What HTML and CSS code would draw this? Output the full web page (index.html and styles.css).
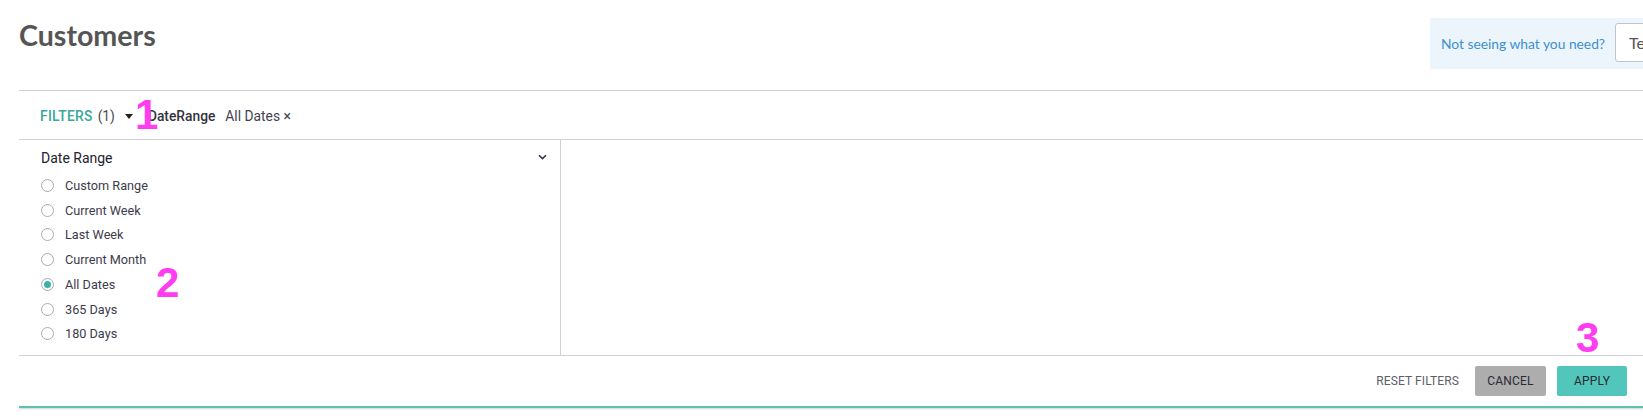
FILE: index.html
```html
<!DOCTYPE html>
<html>
<head>
<meta charset="utf-8">
<link rel="stylesheet" href="styles.css">
</head>
<body>
<div class="page">
  <header class="top">
    <h1 class="title">Customers</h1>
    <div class="help">
      <span class="help-text">Not seeing what you need?</span>
      <div class="help-input">Te</div>
    </div>
  </header>

  <div class="filterbar">
    <span class="filters-label">FILTERS</span>
    <span class="filters-count">(1)</span>
    <span class="caret"></span>
    <span class="chip-name">DateRange</span>
    <span class="chip-value">All Dates <span class="chip-x">×</span></span>
    <span class="annot annot-1">1</span>
  </div>

  <div class="panel">
    <div class="col">
      <div class="col-head">
        <span class="col-title">Date Range</span>
        <svg class="chev" width="9" height="6" viewBox="0 0 9 6"><path d="M1 1.2 L4.5 4.6 L8 1.2" fill="none" stroke="#33334a" stroke-width="1.6"/></svg>
      </div>
      <ul class="options">
        <li class="opt"><span class="radio"></span>Custom Range</li>
        <li class="opt"><span class="radio"></span>Current Week</li>
        <li class="opt"><span class="radio"></span>Last Week</li>
        <li class="opt"><span class="radio"></span>Current Month</li>
        <li class="opt"><span class="radio checked"></span>All Dates</li>
        <li class="opt"><span class="radio"></span>365 Days</li>
        <li class="opt"><span class="radio"></span>180 Days</li>
      </ul>
      <span class="annot annot-2">2</span>
    </div>
    <div class="rest"></div>
  </div>

  <div class="footer">
    <span class="reset">RESET FILTERS</span>
    <button class="btn btn-cancel">CANCEL</button>
    <button class="btn btn-apply">APPLY</button>
    <span class="annot annot-3">3</span>
  </div>
  <div class="teal-line"></div>
</div>
</body>
</html>
```

FILE: styles.css
```css
html, body {
  margin: 0;
  padding: 0;
  background: #ffffff;
  overflow: hidden;
}
body {
  width: 1643px;
  height: 419px;
  font-family: Roboto, "Liberation Sans", sans-serif;
  color: #3a3a4a;
}
.page {
  margin-left: 19px;
  width: 1624px;
  position: relative;
}

/* header */
.top {
  display: flex;
  height: 90px;
  border-bottom: 1px solid #cfcfd6;
  box-sizing: content-box;
}
.title {
  flex: 0 0 1411px;
  margin: 0;
  padding-top: 17px;
  font-family: Lato, "Open Sans", sans-serif;
  font-weight: 700;
  font-size: 28.6px;
  line-height: 36px;
  color: #555555;
}
.help {
  flex: 0 0 auto;
  width: 320px;
  height: 51px;
  margin-top: 18px;
  background: #edf5fc;
  display: flex;
  align-items: center;
  padding-left: 11px;
  box-sizing: border-box;
}
.help-text {
  font-family: Lato, "Open Sans", sans-serif;
  font-size: 13.8px;
  color: #3a91cf;
  margin-right: 10px;
  white-space: nowrap;
}
.help-input {
  width: 200px;
  height: 39px;
  box-sizing: border-box;
  border: 1px solid #c4c4c4;
  border-radius: 3px;
  background: #fff;
  font-family: Lato, "Open Sans", sans-serif;
  font-size: 16px;
  color: #555;
  line-height: 37px;
  padding-left: 13px;
  margin-top: -2px;
}

/* filter bar */
.filterbar {
  height: 49px;
  box-sizing: border-box;
  border-bottom: 1px solid #cfcfd6;
  display: flex;
  align-items: center;
  padding-left: 21px;
  padding-top: 2px;
  font-size: 13.8px;
  position: relative;
}
.filters-label {
  color: #3aa899;
  font-weight: 500;
  letter-spacing: 0.3px;
}
.filters-count {
  color: #4a4a55;
  margin-left: 5px;
}
.caret {
  width: 0;
  height: 0;
  border-left: 4px solid transparent;
  border-right: 4px solid transparent;
  border-top: 5px solid #222;
  margin-left: 10px;
  margin-top: 1px;
}
.chip-name {
  margin-left: 15px;
  color: #333340;
  font-weight: 500;
}
.chip-value {
  margin-left: 10px;
  color: #444450;
}
.chip-x {
  font-size: 14px;
}

/* panel */
.panel {
  display: flex;
  height: 215px;
  border-bottom: 1px solid #cfcfd6;
}
.col {
  flex: 0 0 542px;
  border-right: 1px solid #cfcfd6;
  padding: 8px 0 0 0;
  box-sizing: border-box;
  position: relative;
}
.col-head {
  display: flex;
  align-items: center;
  justify-content: space-between;
  height: 20px;
  padding: 0 13px 0 22px;
}
.col-title {
  font-size: 14px;
  color: #22222e;
}
.chev {
  margin-top: -2px;
}
.options {
  list-style: none;
  margin: 5px 0 0 0;
  padding: 0 0 0 22px;
}
.opt {
  display: flex;
  align-items: center;
  height: 24.75px;
  font-size: 12.7px;
  color: #3c3c4c;
}
.radio {
  width: 13px;
  height: 13px;
  border: 1px solid #a9a9b2;
  border-radius: 50%;
  box-sizing: border-box;
  margin-right: 11px;
  display: flex;
  align-items: center;
  justify-content: center;
  flex: 0 0 auto;
}
.radio.checked::after {
  content: "";
  width: 7px;
  height: 7px;
  border-radius: 50%;
  background: #3ab3a4;
}
.rest {
  flex: 1;
}

/* footer */
.footer {
  height: 50px;
  display: flex;
  align-items: flex-start;
  justify-content: flex-end;
  padding: 10px 16px 0 0;
  box-sizing: border-box;
  position: relative;
}
.reset {
  font-size: 12px;
  color: #5e5e6a;
  line-height: 30px;
  margin-right: 16px;
  letter-spacing: 0.1px;
}
.btn {
  height: 30px;
  border: none;
  border-radius: 2px;
  font-family: Roboto, "Liberation Sans", sans-serif;
  font-size: 12px;
  color: #2a2a35;
  padding: 0;
  letter-spacing: 0.2px;
}
.btn-cancel {
  width: 71px;
  background: #adadad;
  margin-right: 11px;
}
.btn-apply {
  width: 70px;
  background: #52c6bb;
}
.teal-line {
  height: 2px;
  background: #5cc3b3;
  box-shadow: 0 1px 2px rgba(120, 120, 140, 0.35);
}

/* annotations */
.annot {
  position: absolute;
  font-family: "Liberation Sans", Arial, sans-serif;
  font-weight: 700;
  font-size: 42px;
  line-height: 1;
  color: #ff3cf0;
}
.annot-1 {
  left: 116px;
  top: 3px;
}
.annot-2 {
  left: 137px;
  top: 122px;
}
.annot-3 {
  left: 1557px;
  top: -39px;
}
```
